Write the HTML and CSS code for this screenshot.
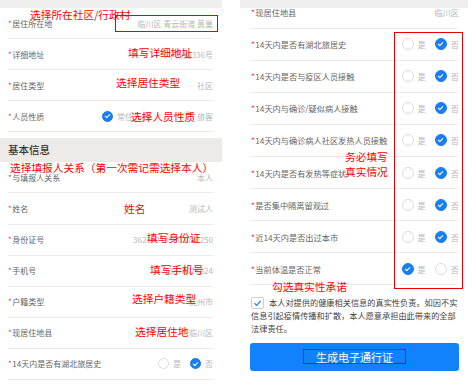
FILE: index.html
```html
<!DOCTYPE html>
<html lang="zh-CN">
<head>
  <meta charset="UTF-8">
  <title>健康信息填报</title>
  <link rel="stylesheet" href="styles.css">
</head>
<body>

  <div class="screens">

    <section class="phone left">
      <div class="topbar"></div>

      <div class="row"><span class="label"><i>*</i>居住所在地</span><span class="value">临川区 青云街道 黄巢</span></div>
      <div class="row"><span class="label"><i>*</i>详细地址</span><span class="value">学府路336号</span></div>
      <div class="row"><span class="label"><i>*</i>居住类型</span><span class="value">社区</span></div>
      <div class="row">
        <span class="label"><i>*</i>人员性质</span>
        <span class="radios wide">
          <span class="opt"><b class="dot on"></b>常住人员</span>
          <span class="opt"><b class="dot"></b>旅客</span>
        </span>
      </div>

      <div class="group-title">基本信息</div>

      <div class="row"><span class="label"><i>*</i>与填报人关系</span><span class="value">本人</span></div>
      <div class="row"><span class="label"><i>*</i>姓名</span><span class="value">测试人</span></div>
      <div class="row"><span class="label"><i>*</i>身份证号</span><span class="value">362502199001012250</span></div>
      <div class="row"><span class="label"><i>*</i>手机号</span><span class="value">13879016624</span></div>
      <div class="row"><span class="label"><i>*</i>户籍类型</span><span class="value">抚州市</span></div>
      <div class="row"><span class="label"><i>*</i>现居住地县</span><span class="value">临川区</span></div>
      <div class="row">
        <span class="label"><i>*</i>14天内是否有湖北旅居史</span>
        <span class="radios">
          <span class="opt"><b class="dot"></b>是</span>
          <span class="opt"><b class="dot on"></b>否</span>
        </span>
      </div>
    </section>

    <section class="phone right">
      <div class="topbar over"></div>

      <div class="list">
        <div class="row"><span class="label"><i>*</i>现居住地县</span><span class="value">临川区</span></div>
        <div class="row">
          <span class="label"><i>*</i>14天内是否有湖北旅居史</span>
          <span class="radios"><span class="opt"><b class="dot"></b>是</span><span class="opt"><b class="dot on"></b>否</span></span>
        </div>
        <div class="row">
          <span class="label"><i>*</i>14天内是否与疫区人员接触</span>
          <span class="radios"><span class="opt"><b class="dot"></b>是</span><span class="opt"><b class="dot on"></b>否</span></span>
        </div>
        <div class="row">
          <span class="label"><i>*</i>14天内与确诊/疑似病人接触</span>
          <span class="radios"><span class="opt"><b class="dot"></b>是</span><span class="opt"><b class="dot on"></b>否</span></span>
        </div>
        <div class="row">
          <span class="label"><i>*</i>14天内与确诊病人社区发热人员接触</span>
          <span class="radios"><span class="opt"><b class="dot"></b>是</span><span class="opt"><b class="dot on"></b>否</span></span>
        </div>
        <div class="row">
          <span class="label"><i>*</i>14天内是否有发热等症状</span>
          <span class="radios"><span class="opt"><b class="dot"></b>是</span><span class="opt"><b class="dot on"></b>否</span></span>
        </div>
        <div class="row">
          <span class="label"><i>*</i>是否集中隔离留观过</span>
          <span class="radios"><span class="opt"><b class="dot"></b>是</span><span class="opt"><b class="dot on"></b>否</span></span>
        </div>
        <div class="row">
          <span class="label"><i>*</i>近14天内是否出过本市</span>
          <span class="radios"><span class="opt"><b class="dot"></b>是</span><span class="opt"><b class="dot on"></b>否</span></span>
        </div>
        <div class="row">
          <span class="label"><i>*</i>当前体温是否正常</span>
          <span class="radios"><span class="opt"><b class="dot on"></b>是</span><span class="opt"><b class="dot"></b>否</span></span>
        </div>
      </div>

      <p class="promise">
        <span class="checkbox">
          <svg width="13" height="12" viewBox="0 0 13 12"><path d="M3.5 6.2 L5.6 8.3 L9.6 4" fill="none" stroke="#1a7ef0" stroke-width="1.2"/></svg>
        </span>本人对提供的健康相关信息的真实性负责。如因不实信息引起疫情传播和扩散，本人愿意承担由此带来的全部法律责任。
      </p>

      <button class="submit">生成电子通行证</button>
    </section>

  </div>

  <!-- red notes drawn over the screenshots -->
  <div class="notes">
    <span class="note" style="left:30px;top:9.5px">选择所在社区/行政村</span>
    <span class="mark" style="left:115px;top:15px;width:103px;height:17px"></span>
    <span class="note" style="left:128px;top:48px">填写详细地址</span>
    <span class="note" style="left:116px;top:78px">选择居住类型</span>
    <span class="note" style="left:131px;top:112px">选择人员性质</span>
    <span class="note" style="left:10px;top:163px">选择填报人关系（第一次需记需选择本人）</span>
    <span class="note" style="left:124px;top:204px">姓名</span>
    <span class="note" style="left:147px;top:233px">填写身份证</span>
    <span class="note" style="left:150px;top:265px">填写手机号</span>
    <span class="note" style="left:132px;top:294px">选择户籍类型</span>
    <span class="note" style="left:135px;top:327px">选择居住地</span>
    <span class="mark" style="left:394px;top:32px;width:69px;height:257px"></span>
    <span class="note two" style="left:345px;top:149px">务必填写<br>真实情况</span>
    <span class="note" style="left:272px;top:282px">勾选真实性承诺</span>
    <span class="mark" style="left:303px;top:349px;width:103px;height:15px"></span>
  </div>

</body>
</html>
```

FILE: styles.css
```css
body {
  margin: 0;
  background: #fff;
  font-family: "Noto Sans CJK SC", "Noto Sans", sans-serif;
  position: relative;
  width: 476px;
  height: 387px;
  overflow: hidden;
}
.screens {
  display: flex;
  gap: 18px;
}
.phone {
  position: relative;
  background: #fff;
}
.phone.left {
  width: 222px;
}
.phone.right {
  width: 230px;
}
.topbar {
  height: 8px;
  background: #efefef;
}
.topbar.over {
  position: absolute;
  top: 0;
  left: 0;
  right: 2px;
  z-index: 1;
}
.row {
  display: flex;
  align-items: center;
  justify-content: space-between;
  box-sizing: border-box;
  height: 31.1px;
  margin: 0 9px 0 8px;
  border-bottom: 1px solid #ebebeb;
  font-size: 8px;
}
.right .list {
  margin-top: -3.5px;
}
.right .row {
  height: 32.1px;
  margin: 0 11px;
  font-size: 8.2px;
}
.label {
  color: #666;
  white-space: nowrap;
}
.label i {
  font-style: normal;
  color: #f03c3c;
  margin-right: 0.5px;
}
.value {
  color: #b8b8b8;
  white-space: nowrap;
}
.group-title {
  margin-top: 6px;
  height: 24px;
  line-height: 24px;
  padding-left: 8px;
  background: #edeae8;
  color: #333;
  font-size: 10.5px;
  font-weight: 500;
}
.radios {
  display: flex;
  gap: 9px;
  color: #b8b8b8;
}
.radios.wide {
  gap: 33px;
}
.opt {
  display: flex;
  align-items: center;
  gap: 4px;
}
.dot {
  display: flex;
  align-items: center;
  justify-content: center;
  box-sizing: border-box;
  width: 11px;
  height: 11px;
  border: 1px solid #dcdcdc;
  border-radius: 50%;
}
.right .dot {
  width: 12px;
  height: 12px;
}
.dot.on {
  background: #1a7ef0;
  border-color: #1a7ef0;
}
.dot.on::after {
  content: "";
  width: 4px;
  height: 2px;
  margin-top: -1px;
  border-left: 1px solid #fff;
  border-bottom: 1px solid #fff;
  transform: rotate(-45deg);
}
.promise {
  margin: 11px 11px 0 11px;
  font-size: 8.2px;
  line-height: 13px;
  color: #444;
}
.checkbox {
  float: left;
  width: 13px;
  height: 12px;
  margin: 0.5px 5px 0 0;
  box-sizing: border-box;
  border: 1px solid #d0d0d0;
  border-radius: 2px;
}
.checkbox svg {
  display: block;
  margin: -1px;
}
.submit {
  display: block;
  width: 209px;
  height: 28px;
  margin: 8px 0 0 10px;
  border: none;
  border-radius: 3px;
  background: #1182fb;
  color: #fff;
  font-family: inherit;
  font-size: 11px;
}
.notes {
  position: absolute;
  inset: 0;
  pointer-events: none;
}
.note {
  position: absolute;
  color: #ff0000;
  font-size: 10.7px;
  line-height: 10.7px;
  white-space: nowrap;
}
.note.two {
  line-height: 15px;
}
.mark {
  position: absolute;
  box-sizing: border-box;
  border: 1px solid #e60000;
}
```
